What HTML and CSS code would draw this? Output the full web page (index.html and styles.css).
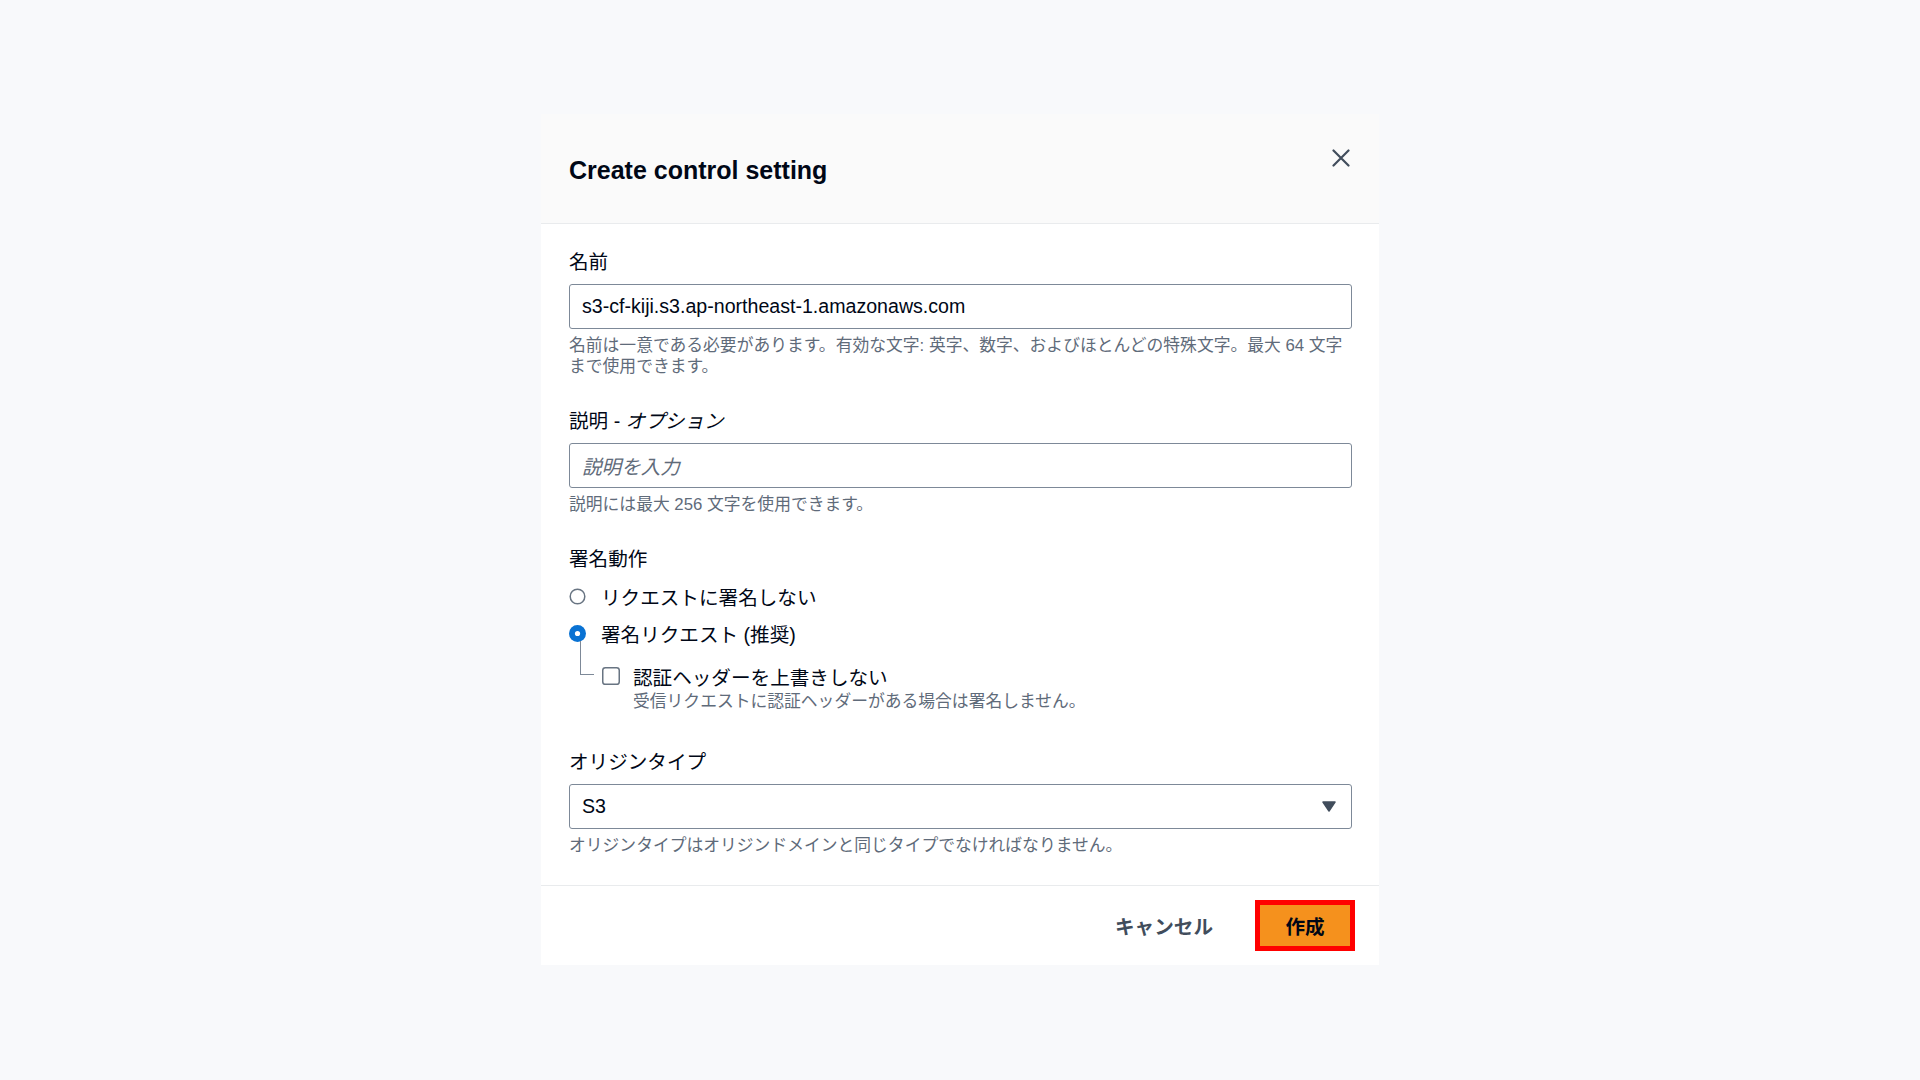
FILE: index.html
```html
<!DOCTYPE html>
<html lang="ja">
<head>
<meta charset="utf-8">
<title>Create control setting</title>
<link rel="stylesheet" href="styles.css">
</head>
<body>
<div class="modal">
  <div class="modal-header">
    <h2 class="modal-title">Create control setting</h2>
    <button class="close-btn" aria-label="Close">
      <svg width="18" height="18" viewBox="0 0 18 18"><path d="M1.5 1.5 L16.5 16.5 M16.5 1.5 L1.5 16.5" stroke="#414d5c" stroke-width="2.2" stroke-linecap="round" fill="none"/></svg>
    </button>
  </div>
  <div class="modal-body">
    <div class="field">
      <div class="label">名前</div>
      <div class="input">s3-cf-kiji.s3.ap-northeast-1.amazonaws.com</div>
      <div class="help">名前は一意である必要があります。有効な文字: 英字、数字、およびほとんどの特殊文字。最大 64 文字まで使用できます。</div>
    </div>
    <div class="field">
      <div class="label">説明 - <i>オプション</i></div>
      <div class="input placeholder">説明を入力</div>
      <div class="help">説明には最大 256 文字を使用できます。</div>
    </div>
    <div class="field">
      <div class="label">署名動作</div>
      <div class="radio-row first">
        <svg class="radio" width="17" height="17" viewBox="0 0 17 17"><circle cx="8.5" cy="8.5" r="7.3" fill="#fff" stroke="#687482" stroke-width="1.5"/></svg>
        <span>リクエストに署名しない</span>
      </div>
      <div class="radio-row">
        <svg class="radio" width="17" height="17" viewBox="0 0 17 17"><circle cx="8.5" cy="8.5" r="8.5" fill="#0972d3"/><circle cx="8.5" cy="8.5" r="2.6" fill="#fff"/></svg>
        <span>署名リクエスト (推奨)</span>
      </div>
      <div class="nested">
        <div class="check-row">
          <svg class="checkbox" width="18" height="18" viewBox="0 0 18 18"><rect x="0.75" y="0.75" width="16.5" height="16.5" rx="2.6" fill="#fff" stroke="#687482" stroke-width="1.5"/></svg>
          <span>認証ヘッダーを上書きしない</span>
        </div>
        <div class="check-desc">受信リクエストに認証ヘッダーがある場合は署名しません。</div>
      </div>
    </div>
    <div class="field origin">
      <div class="label">オリジンタイプ</div>
      <div class="input select">
        <span>S3</span>
        <svg width="14" height="11" viewBox="0 0 14 11"><path d="M1 1 L13 1 L7 10 Z" fill="#414d5c" stroke="#414d5c" stroke-width="1.5" stroke-linejoin="round"/></svg>
      </div>
      <div class="help">オリジンタイプはオリジンドメインと同じタイプでなければなりません。</div>
    </div>
  </div>
  <div class="modal-footer">
    <button class="btn-link">キャンセル</button>
    <button class="btn-primary">作成</button>
  </div>
</div>
</body>
</html>
```

FILE: styles.css
```css
* { box-sizing: border-box; }

html, body {
  margin: 0;
  padding: 0;
}

body {
  background: #f8f9fb;
  font-family: "Liberation Sans", "Noto Sans CJK JP", sans-serif;
  color: #000716;
  min-height: 1080px;
}

.modal {
  width: 838px;
  margin: 114px auto 0;
  background: #ffffff;
}

.modal-header {
  height: 110px;
  background: #fafafa;
  border-bottom: 1px solid #e9ebed;
  display: flex;
  justify-content: space-between;
  align-items: flex-start;
  padding: 35px 29px 0 28px;
}

.modal-title {
  margin: 4px 0 0 0;
  font-size: 25px;
  line-height: 34px;
  font-weight: 700;
  color: #000716;
}

.close-btn {
  margin: 0;
  padding: 0;
  border: 0;
  background: transparent;
  width: 18px;
  height: 18px;
  display: flex;
}

.modal-body {
  padding: 24px 27px 29px 28px;
}

.field + .field {
  margin-top: 30px;
}

.field.origin {
  margin-top: 36px;
}

.label {
  font-size: 19.6px;
  line-height: 28px;
  color: #000716;
}

.label i {
  font-style: italic;
}

.input {
  margin-top: 8px;
  height: 45px;
  border: 1px solid #7d8998;
  border-radius: 3px;
  padding: 0 12px;
  display: flex;
  align-items: center;
  font-size: 19.6px;
  color: #000716;
  background: #fff;
}

.input.placeholder {
  color: #5f6b7a;
  font-style: italic;
}

.input.select {
  justify-content: space-between;
  padding-right: 15px;
}

.help {
  margin-top: 6px;
  font-size: 16.8px;
  line-height: 21px;
  color: #5f6b7a;
}

.radio-row {
  display: flex;
  align-items: center;
  gap: 15px;
  height: 28px;
  margin-top: 9px;
  font-size: 19.6px;
}

.radio-row.first {
  margin-top: 9px;
}

.radio {
  flex: none;
}

.nested {
  position: relative;
  margin-top: 15px;
  margin-left: 32px;
}

.nested::before {
  content: "";
  position: absolute;
  left: -21px;
  top: -21px;
  width: 13px;
  height: 33px;
  border-left: 1px solid #7d8998;
  border-bottom: 1px solid #7d8998;
}

.check-row {
  display: flex;
  align-items: center;
  gap: 13px;
  height: 28px;
  font-size: 19.6px;
  padding-left: 1px;
}

.checkbox {
  flex: none;
}

.check-desc {
  margin-top: 1px;
  font-size: 16.8px;
  line-height: 21px;
  color: #5f6b7a;
  padding-left: 32px;
}

.modal-footer {
  border-top: 1px solid #e9ebed;
  padding: 14px 24px 14px 28px;
  display: flex;
  justify-content: flex-end;
  align-items: center;
}

.btn-link {
  border: 0;
  background: transparent;
  font-family: inherit;
  font-size: 19.6px;
  font-weight: 700;
  color: #414d5c;
  padding: 0;
  margin-right: 42px;
}

.btn-primary {
  width: 100px;
  height: 51px;
  border: 5px solid #ff0000;
  background: #f5911d;
  font-family: inherit;
  font-size: 19.6px;
  font-weight: 700;
  color: #000716;
  padding: 0;
}
```
